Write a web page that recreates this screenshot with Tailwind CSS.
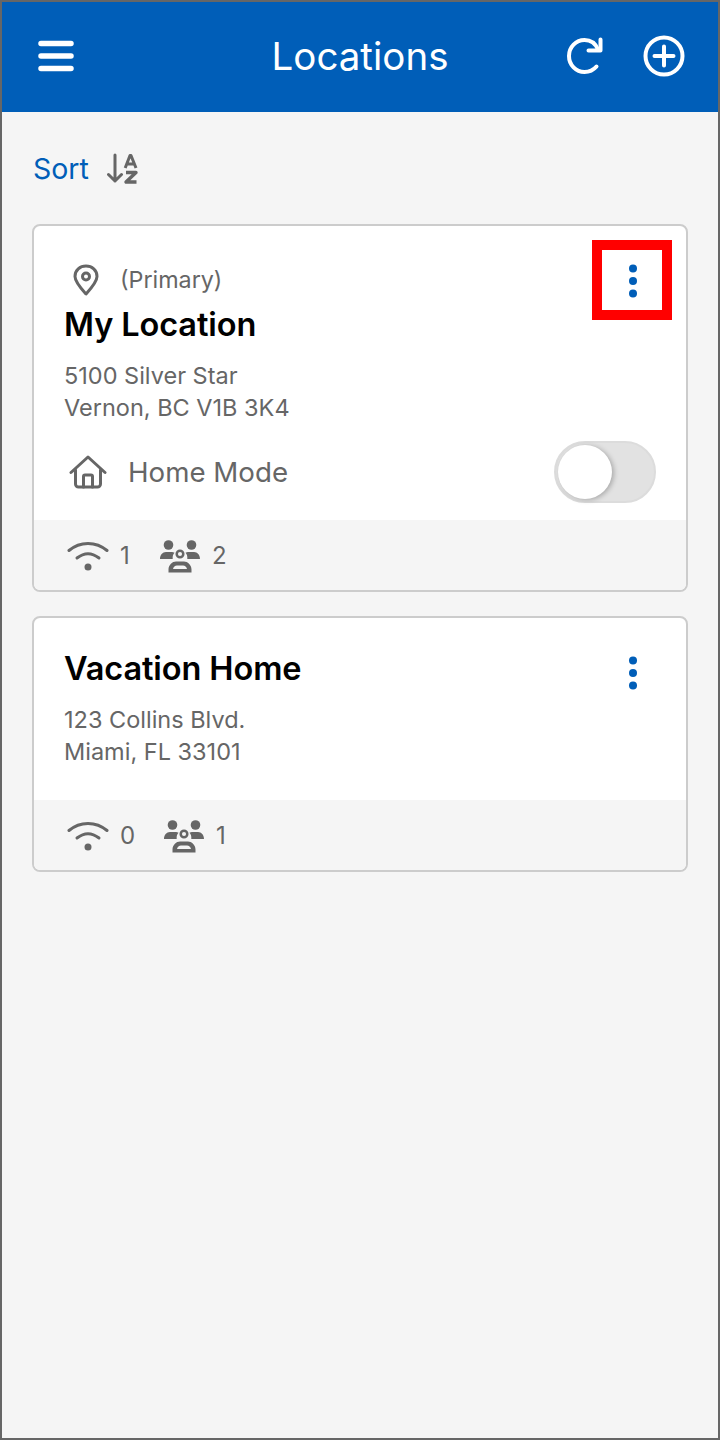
<!DOCTYPE html>
<html lang="en">
<head>
  <meta charset="UTF-8">
  <title>Locations</title>
  <script src="https://cdn.jsdelivr.net/npm/@tailwindcss/browser@4"></script>
</head>
<body class="font-['Inter',sans-serif]">
  <div class="w-[720px] h-[1440px] bg-[#f5f5f5] border-2 border-[#666666] flex flex-col overflow-hidden">

    <!-- Header -->
    <header class="h-[110px] shrink-0 bg-[#005eb8] grid grid-cols-[1fr_auto_1fr] items-center text-white">
      <svg class="ml-[36px] mb-[2px]" width="36" height="32" viewBox="0 0 36 32" fill="none" stroke="white" stroke-width="5.5" stroke-linecap="round">
        <path d="M3 3.500h30M3 16h30M3 28.500h30"/>
      </svg>
      <h1 class="text-center text-[38.500px] leading-[44px] mb-[2px]">Locations</h1>
      <div class="flex items-center justify-end mb-[2px]">
        <svg class="mr-[39px]" width="38" height="38" viewBox="0 0 38 38" fill="none" stroke="white" stroke-width="4" stroke-linecap="round" stroke-linejoin="round">
          <path d="M32 12.500C29.500 6.500 24.500 3 18.500 3C10 3 3 10 3 19s7 16 15.500 16c5 0 9-2 12-5.500"/>
          <path d="M34.500 2.500V13.500H22.500"/>
        </svg>
        <svg class="mr-[33px]" width="42" height="42" viewBox="0 0 42 42" fill="none" stroke="white" stroke-linecap="round">
          <circle cx="21" cy="21" r="18.500" stroke-width="4"/>
          <path d="M21 11.500v19M11.500 21h19" stroke-width="4"/>
        </svg>
      </div>
    </header>

    <main class="px-[30px] flex flex-col">
      <!-- Sort -->
      <div class="h-[112px] flex items-center">
        <span class="ml-[1px] mt-[2px] text-[#005eb8] text-[28.500px] leading-[32px]">Sort</span>
        <svg class="ml-[18px] mt-[1px]" width="32" height="32" viewBox="0 0 32 32" fill="none" stroke="#666666" stroke-linecap="round" stroke-linejoin="round">
          <path d="M8 2v26M1.500 21.500L8 28l6.500-6.500" stroke-width="3"/>
          <path d="M18.200 15l4.800-12.500h1L29 15M20 11h7.500" stroke-width="3" stroke-linecap="butt"/>
          <path d="M19 19.500h10L19 29h10.500" stroke-width="3.400" stroke-linecap="butt"/>
        </svg>
      </div>

      <!-- My Location -->
      <section class="relative bg-white border-2 border-[#cccccc] rounded-[8px] overflow-hidden">
        <div class="h-[294px] pl-[30px] pr-[30px] flex flex-col">
          <div class="flex items-center mt-[36px] h-[36px]">
            <svg class="ml-[9px]" width="26" height="32" viewBox="0 0 26 32" fill="none" stroke="#666666" stroke-width="3">
              <path stroke-linejoin="round" d="M13 30C8 24.500 2 18 2 12.500C2 6 7 2 13 2s11 4 11 10.500C24 18 18 24.500 13 30z"/>
              <circle cx="13" cy="12.500" r="3.500"/>
            </svg>
            <span class="ml-[21px] text-[23.300px] leading-[30px] text-[#666666]">(Primary)</span>
          </div>
          <h2 class="mt-[4px] text-[32.500px] leading-[46px] font-semibold text-black tracking-[-0.1px]">My Location</h2>
          <p class="mt-[12px] text-[23.500px] leading-[32px] text-[#666666]">5100 Silver Star<br>Vernon, BC V1B 3K4</p>
          <div class="mt-[17px] flex items-center h-[62px]">
            <svg class="ml-[5px]" width="38" height="34" viewBox="0 0 38 34" fill="none" stroke="#666666" stroke-width="3" stroke-linecap="round" stroke-linejoin="round">
              <path d="M2 17.500L19 2l17 15.500"/>
              <path d="M6.500 15v14a3 3 0 0 0 3 3h19a3 3 0 0 0 3-3V15"/>
              <path d="M14.500 32V21.500a1.500 1.500 0 0 1 1.500-1.500h6a1.500 1.500 0 0 1 1.500 1.500V32"/>
            </svg>
            <span class="ml-[21px] text-[27.700px] leading-[34px] text-[#666666]">Home Mode</span>
            <!-- toggle -->
            <div class="ml-auto w-[102px] h-[62px] rounded-full bg-[#e2e2e2] border-2 border-[#dcdcdc] p-[2px]">
              <div class="w-[54px] h-[54px] rounded-full bg-white shadow-[2px_1px_5px_rgba(0,0,0,0.25)]"></div>
            </div>
          </div>
        </div>
        <div class="h-[70px] bg-[#f5f5f5] flex items-center pl-[33px] text-[24px] text-[#666666]">
          <svg class="mt-[2px]" width="42" height="32" viewBox="0 0 42 32" fill="none" stroke="#666666" stroke-width="3" stroke-linecap="round">
            <path d="M2 10.500C13 1 29 1 40 10.500"/>
            <path d="M10 18c7-5.500 15-5.500 22 0"/>
            <circle cx="21" cy="27" r="3.500" fill="#666666" stroke="none"/>
          </svg>
          <span class="ml-[11px] w-[29px] mt-[2px]">1</span>
          <svg class="ml-[11px] mt-[2px]" width="40" height="34" viewBox="0 0 40 34">
            <circle cx="8.500" cy="6" r="4.800" fill="#666666"/>
            <circle cx="31.500" cy="6" r="4.800" fill="#666666"/>
            <path fill="#666666" d="M0 20c0-4 2.500-7 6-7h6c1 0 1.500.2 2.500.7-1.500 1.500-2 3.500-1.800 6.300z"/>
            <path fill="#666666" d="M40 20c0-4-2.500-7-6-7h-6c-1 0-1.500.2-2.500.7 1.500 1.500 2 3.500 1.800 6.300z"/>
            <circle cx="20" cy="15" r="3.300" fill="none" stroke="#666666" stroke-width="2.500"/>
            <path fill="#666666" fill-rule="evenodd" d="M8.500 33.500v-3c0-4.500 4-8 7.500-8h8c3.500 0 7.500 3.500 7.500 8v3zM13 30h14c-.5-2-2-3.500-4-3.500h-6c-2 0-3.500 1.500-4 3.500z"/>
          </svg>
          <span class="ml-[12px] mt-[2px]">2</span>
        </div>
        <!-- red highlight box -->
        <div class="absolute left-[558px] top-[14px] w-[80px] h-[80px] border-[10px] border-[#ff0000] flex items-center justify-center">
          <svg class="ml-[2px] mt-[2px]" width="12" height="34" viewBox="0 0 12 34" fill="#005eb8">
            <circle cx="6" cy="4.500" r="4"/><circle cx="6" cy="17" r="4"/><circle cx="6" cy="29.500" r="4"/>
          </svg>
        </div>
      </section>

      <!-- Vacation Home -->
      <section class="relative mt-[24px] bg-white border-2 border-[#cccccc] rounded-[8px] overflow-hidden">
        <div class="h-[182px] pl-[30px] pr-[30px] flex flex-col">
          <h2 class="mt-[28px] text-[32.500px] leading-[46px] font-semibold text-black tracking-[-0.1px]">Vacation Home</h2>
          <p class="mt-[12px] text-[23.500px] leading-[32px] text-[#666666]">123 Collins Blvd.<br>Miami, FL 33101</p>
        </div>
        <svg class="absolute left-[593px] top-[38px]" width="12" height="34" viewBox="0 0 12 34" fill="#005eb8">
          <circle cx="6" cy="4.500" r="4"/><circle cx="6" cy="17" r="4"/><circle cx="6" cy="29.500" r="4"/>
        </svg>
        <div class="h-[70px] bg-[#f5f5f5] flex items-center pl-[33px] text-[24px] text-[#666666]">
          <svg class="mt-[2px]" width="42" height="32" viewBox="0 0 42 32" fill="none" stroke="#666666" stroke-width="3" stroke-linecap="round">
            <path d="M2 10.500C13 1 29 1 40 10.500"/>
            <path d="M10 18c7-5.500 15-5.500 22 0"/>
            <circle cx="21" cy="27" r="3.500" fill="#666666" stroke="none"/>
          </svg>
          <span class="ml-[11px] w-[33px] mt-[2px]">0</span>
          <svg class="ml-[11px] mt-[2px]" width="40" height="34" viewBox="0 0 40 34">
            <circle cx="8.500" cy="6" r="4.800" fill="#666666"/>
            <circle cx="31.500" cy="6" r="4.800" fill="#666666"/>
            <path fill="#666666" d="M0 20c0-4 2.500-7 6-7h6c1 0 1.500.2 2.500.7-1.500 1.500-2 3.500-1.800 6.300z"/>
            <path fill="#666666" d="M40 20c0-4-2.500-7-6-7h-6c-1 0-1.500.2-2.500.7 1.500 1.500 2 3.500 1.800 6.300z"/>
            <circle cx="20" cy="15" r="3.300" fill="none" stroke="#666666" stroke-width="2.500"/>
            <path fill="#666666" fill-rule="evenodd" d="M8.500 33.500v-3c0-4.500 4-8 7.500-8h8c3.500 0 7.500 3.500 7.500 8v3zM13 30h14c-.5-2-2-3.500-4-3.500h-6c-2 0-3.500 1.500-4 3.500z"/>
          </svg>
          <span class="ml-[12px] mt-[2px]">1</span>
        </div>
      </section>
    </main>
  </div>
</body>
</html>
